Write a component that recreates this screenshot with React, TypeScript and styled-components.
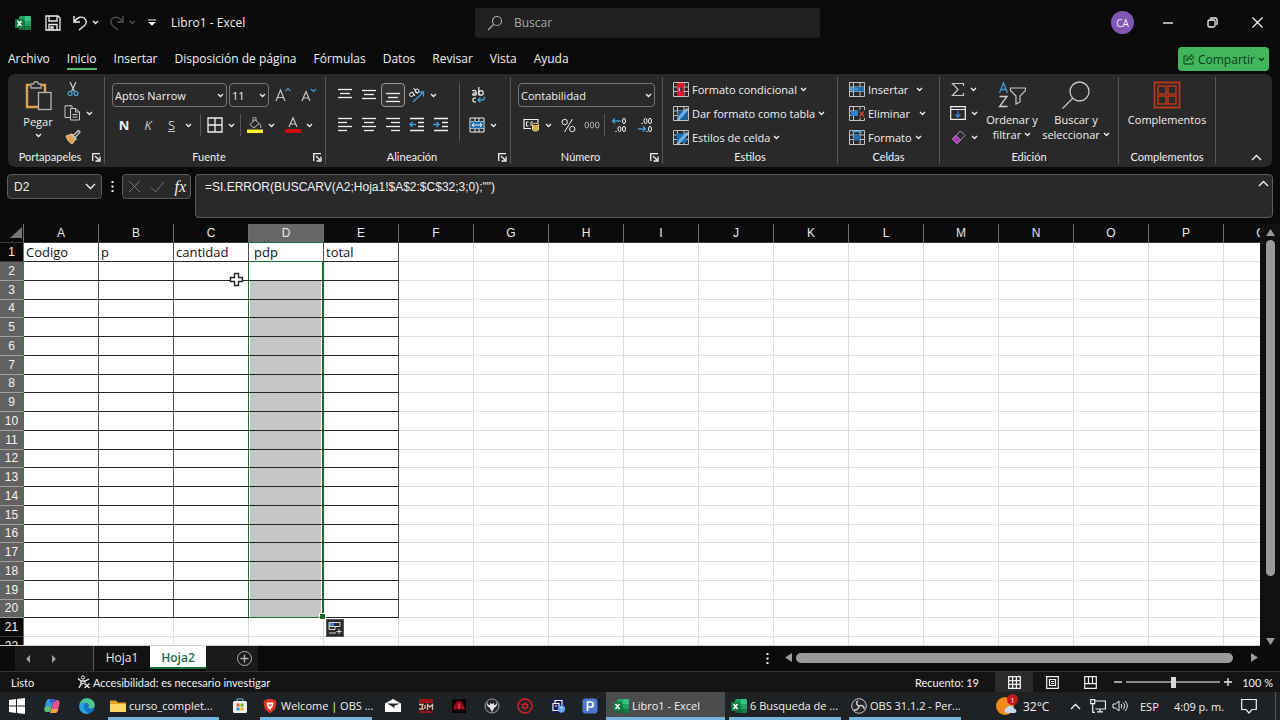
import React from "react";
import styled, { createGlobalStyle, css } from "styled-components";

const ui = `"Open Sans", "Noto Sans", sans-serif`;
const compact = `Lato, "Open Sans", sans-serif`;
const grid = `"Liberation Sans", Arial, sans-serif`;

const GlobalStyle = createGlobalStyle`
  *, *::before, *::after { box-sizing: border-box; }
  body { margin: 0; background: #0a0a0a; color: #f0f0f0; font-family: ${ui}; font-size: 12px; }
  button, select, input { font: inherit; color: inherit; margin: 0; }
  button { border: 0; padding: 0; background: none; cursor: pointer; }
`;

const Window = styled.div`
  display: flex;
  flex-direction: column;
  height: 100vh;
  overflow: hidden;
`;

/* ---------- icons ---------- */

const Svg = styled.svg`
  display: block;
  flex: none;
  fill: none;
  stroke: currentColor;
`;

type IconProps = { w: number; h?: number; children: React.ReactNode };
const Icon = ({ w, h = w, children }: IconProps) => (
  <Svg width={w} height={h} viewBox={`0 0 ${w} ${h}`} aria-hidden="true">
    {children}
  </Svg>
);

const Chevron = () => (
  <Icon w={7} h={5}>
    <path d="M1 1l2.500 2.500L6 1" strokeWidth="1.300" />
  </Icon>
);

const ExcelLogo = () => (
  <Icon w={16}>
    <g stroke="none">
      <rect x="4" y="1" width="12" height="14" rx="1.500" fill="#21a366" />
      <path d="M10 1h4.500a1.500 1.500 0 0 1 1.500 1.500V6h-6z" fill="#33c481" />
      <path d="M4 6h6v5H4z" fill="#107c41" />
      <path d="M10 11h6v2.500a1.500 1.500 0 0 1-1.500 1.500H10z" fill="#107c41" />
      <path d="M4 11h6v4H5.500A1.500 1.500 0 0 1 4 13.500z" fill="#185c37" />
      <rect x="0" y="4" width="9" height="9" rx="1" fill="#107c41" />
    </g>
    <path d="M2.500 6l4 5M6.500 6l-4 5" stroke="#fff" strokeWidth="1.400" />
  </Icon>
);

const SaveIcon = () => (
  <Icon w={16}>
    <path d="M1 1h12l2 2v12H1zM4 1v5h8V1M4 15V9.500h8V15M6 15v-3h2v3" strokeWidth="1.300" />
  </Icon>
);
const UndoIcon = () => (
  <Icon w={16}>
    <path d="M2 1v6h6M2.500 6.500C5 2.500 9 1 12 3s3 5 0 8l-5 4" strokeWidth="1.400" />
  </Icon>
);
const RedoIcon = () => (
  <Icon w={16}>
    <path d="M14 1v6H8M13.500 6.500C11 2.500 7 1 4 3s-3 5 0 8l5 4" strokeWidth="1.300" />
  </Icon>
);
const QuickMenuIcon = () => (
  <Icon w={8}>
    <path d="M0 1h8M1.500 3.500L4 6l2.500-2.500z" strokeWidth="1.200" fill="currentColor" />
  </Icon>
);
const SearchIcon = () => (
  <Icon w={16}>
    <circle cx="10" cy="6" r="4.500" strokeWidth="1.200" />
    <path d="M6.500 9.500L1 15" strokeWidth="1.200" />
  </Icon>
);
const MinimizeIcon = () => (
  <Icon w={10}>
    <path d="M0 5h10" strokeWidth="1.400" />
  </Icon>
);
const RestoreIcon = () => (
  <Icon w={11}>
    <rect x="1" y="3" width="7" height="7" rx="1.500" strokeWidth="1.300" />
    <path d="M3 1.500C3.300 1 4 1 4.500 1H8a2 2 0 0 1 2 2v3.500c0 .5 0 1.200-.5 1.500" strokeWidth="1.300" />
  </Icon>
);
const CloseIcon = () => (
  <Icon w={11}>
    <path d="M.5.5l10 10M10.500.5l-10 10" strokeWidth="1.300" />
  </Icon>
);
const ShareIcon = () => (
  <Icon w={12}>
    <path d="M4 3H1v8h9V8M3.500 8c0-3 2-4.500 4.500-4.500V1.500L11 4.500 8 7V5.500C6 5.500 4.500 6 3.500 8z" />
  </Icon>
);

const PasteIcon = () => (
  <Icon w={28} h={30}>
    <path d="M6 4H3v22h11" stroke="#e0a04c" strokeWidth="2.400" />
    <path d="M17 4h4v7" stroke="#e0a04c" strokeWidth="2.400" />
    <path d="M7 7V3h2.500c0-3 5-3 5 0H17v4z" stroke="#a9a9a9" strokeWidth="1.300" fill="#292929" />
    <rect x="14.500" y="11.500" width="12.500" height="17" stroke="#b5b5b5" strokeWidth="1.300" fill="#292929" />
  </Icon>
);
const CutIcon = () => (
  <Icon w={12} h={16}>
    <path d="M3 1l4.500 9.500M9 1L4.500 10.500" stroke="#d0d0d0" strokeWidth="1.200" />
    <circle cx="3" cy="12.500" r="2" stroke="#3f9ad8" strokeWidth="1.300" />
    <circle cx="9" cy="12.500" r="2" stroke="#3f9ad8" strokeWidth="1.300" />
  </Icon>
);
const CopyIcon = () => (
  <Icon w={17} h={16}>
    <path d="M6 12.500H1V.8h5.500M5.500.8H8V3" stroke="#c8c8c8" />
    <path d="M6.500 3.500h5L15.500 7v8h-9zM11.500 3.500V7h4M8.500 9.500h5M8.500 12h5" stroke="#c8c8c8" />
  </Icon>
);
const BrushIcon = () => (
  <Icon w={16}>
    <path d="M1 7l6-2 4 5-4 5c-2-1-5-4-6-8z" fill="#e0a04c" stroke="#d9c7a5" />
    <path d="M6 5l5.500 5.500M8 6.500l5.500-5 1.500 1.500-5 5.500" stroke="#c8c8c8" strokeWidth="1.300" />
  </Icon>
);
const GrowFontIcon = () => (
  <Icon w={16}>
    <path d="M1 14L5.500 3l4.500 11M2.800 10.500h5.500" strokeWidth="1.200" stroke="#c8c8c8" />
    <path d="M10.500 4L13 1.500 15.500 4" stroke="#3f9ad8" strokeWidth="1.200" />
  </Icon>
);
const ShrinkFontIcon = () => (
  <Icon w={16}>
    <path d="M1 14L5 4.500 9 14M2.500 11h5" strokeWidth="1.200" stroke="#c8c8c8" />
    <path d="M10 2l2.500 2.500L15 2" stroke="#3f9ad8" strokeWidth="1.200" />
  </Icon>
);
const BorderIcon = () => (
  <Icon w={16}>
    <path d="M1 1h14v14H1zM8 1v14M1 8h14" strokeWidth="1.300" />
  </Icon>
);
const FillIcon = () => (
  <Icon w={17}>
    <path d="M4 7.500L9 2.500l4 4-5 4.500zM7 5V1.500a1.500 1.500 0 0 1 3 0V4M13 6.500c2 1 2 3 1.500 4.500" stroke="#c0c0c0" />
    <path d="M1 12.500h16v3.500H1z" fill="#f7f02c" stroke="none" />
  </Icon>
);
const FontColorIcon = () => (
  <Icon w={16}>
    <path d="M4 10L8 .8 12 10M5.500 7h5" stroke="#c8c8c8" strokeWidth="1.200" />
    <path d="M0 12h16v4H0z" fill="#d00a0a" stroke="none" />
  </Icon>
);

const Lines = ({ rows }: { rows: [number, number, number][] }) => (
  <Icon w={16}>
    {rows.map(([x1, x2, y]) => (
      <path key={y} d={`M${x1} ${y + 0.5}H${x2}`} strokeWidth="1.300" />
    ))}
  </Icon>
);
const IndentIcon = ({ right }: { right?: boolean }) => (
  <Icon w={16}>
    <path d="M1 1.500h14M9 5.500h6M9 9.500h6M1 13.500h14" strokeWidth="1.300" />
    <path d={right ? "M0 7.500h6M3.500 5L6 7.500 3.500 10" : "M7 7.500H1M3.500 5L1 7.500 3.500 10"} stroke="#3f9ad8" strokeWidth="1.400" />
  </Icon>
);
const OrientationIcon = () => (
  <Icon w={17} h={16}>
    <circle cx="3.500" cy="7.500" r="2" />
    <path d="M4 4.500l3 4.500M5.500 1l4 5.500" />
    <circle cx="9" cy="4" r="2" />
    <path d="M5 15L15 5.500M11 5h4.500v4.500" stroke="#3f9ad8" strokeWidth="1.300" />
  </Icon>
);
const WrapTextIcon = () => (
  <Icon w={16}>
    <path d="M2.500 4.200c.6-1.200 3.700-1.200 3.700.8v3.200M6.200 5.700c-3.700 0-4.700 2.500-2.200 2.500 1.200 0 2.200-.8 2.200-2M8.800 0v8.500" strokeWidth="1.200" />
    <circle cx="11" cy="5.900" r="2.200" strokeWidth="1.200" />
    <path d="M6 11c-4-.8-4.500 4.500 0 4" strokeWidth="1.200" />
    <path d="M14.500 9.500v1c0 1.700-1 2.500-2.500 2.500H8M10.500 10.500L8 13l2.500 2.500" stroke="#3f9ad8" strokeWidth="1.400" />
  </Icon>
);
const MergeIcon = () => (
  <Icon w={16}>
    <path d="M1 1h14v14H1zM1 4.500h14M1 11.500h14M6 1v3M10 1v3M6 12v3M10 12v3" />
    <path d="M1.500 4.500h13v7h-13z" fill="#1f6fb0" stroke="none" />
    <path d="M3 8h10M5 6L3 8l2 2M11 6l2 2-2 2" />
  </Icon>
);
const CurrencyIcon = () => (
  <Icon w={17} h={14}>
    <path d="M8 10.500H1v-9h14V5" strokeWidth="1.200" />
    <path d="M5.500 4H3.500v4h2M8 4h2M8 4v4" />
    <path d="M9.500 6.500v5.500c1 1.300 5 1.300 6 0V6.500" fill="#c99b2e" stroke="#f0d27a" />
    <ellipse cx="12.500" cy="6.500" rx="3" ry="1.300" fill="#292929" stroke="#f0d27a" />
    <path d="M9.500 9.200c1 1.300 5 1.300 6 0" stroke="#f0d27a" />
  </Icon>
);
const PercentIcon = () => (
  <Icon w={15}>
    <circle cx="3.700" cy="4" r="2.700" />
    <circle cx="11.300" cy="11" r="2.700" />
    <path d="M11.500 1l-8 13" />
  </Icon>
);
const ThousandsIcon = () => (
  <Icon w={16} h={10}>
    <ellipse cx="2.800" cy="5" rx="1.800" ry="3" stroke="#aaa" />
    <ellipse cx="8" cy="5" rx="1.800" ry="3" stroke="#aaa" />
    <ellipse cx="13.200" cy="5" rx="1.800" ry="3" stroke="#aaa" />
  </Icon>
);
const DecimalIcon = ({ less }: { less?: boolean }) => (
  <Icon w={16}>
    <ellipse cx="13" cy="4" rx="1.500" ry="2.700" />
    <ellipse cx="13" cy="12" rx="1.500" ry="2.700" />
    {less ? (
      <>
        <ellipse cx="8.500" cy="4" rx="1.500" ry="2.700" />
        <path d="M5 6v1M10 14v1" strokeWidth="1.300" />
        <path d="M1 12h7M6 9.500L8.500 12 6 14.500" stroke="#3f9ad8" strokeWidth="1.400" />
      </>
    ) : (
      <>
        <ellipse cx="8.500" cy="12" rx="1.500" ry="2.700" />
        <path d="M5 14v1" strokeWidth="1.300" />
        <path d="M10 4H1.500M4 1.500L1.500 4 4 6.500" stroke="#3f9ad8" strokeWidth="1.400" />
      </>
    )}
  </Icon>
);

const TableIcon = ({ children }: { children: React.ReactNode }) => (
  <Icon w={16} h={15}>
    <path d="M.5.5h15v14H.5zM.5 5h15M.5 9.500h15M4.500.5v14M11 .5v14" stroke="#c4c4c4" />
    {children}
  </Icon>
);
const Pen = () => <path d="M15 3.500l-6 7-3.500 3.500 1-4 7-7.500z" fill="#4fa3e0" stroke="#bcdcf5" strokeWidth=".8" />;

const ConditionalIcon = () => (
  <TableIcon>
    <path d="M4 1h7v4H4zM4 10h7v4H4z" fill="#e0182d" stroke="none" />
    <path d="M5 5h5v5H5z" fill="#292929" stroke="#e0182d" strokeWidth="1.500" />
    <path d="M6.500 5.500v4" stroke="#8fb7ff" strokeWidth="1.500" />
  </TableIcon>
);
const FormatTableIcon = () => (
  <TableIcon>
    <path d="M4.500 5H15v9H4.500z" fill="#1f5f9c" stroke="none" />
    <Pen />
  </TableIcon>
);
const CellStyleIcon = () => (
  <TableIcon>
    <path d="M3.500 3.500h10v9h-10z" fill="#1f6fb0" stroke="none" />
    <Pen />
  </TableIcon>
);
const InsertCellsIcon = () => (
  <TableIcon>
    <path d="M6 5h9v4.500H6z" fill="#1f6fb0" stroke="none" />
    <path d="M9 7.300H1.500M4.500 4.300l-3 3 3 3" stroke="#4fa3e0" strokeWidth="1.500" />
  </TableIcon>
);
const DeleteCellsIcon = () => (
  <TableIcon>
    <path d="M2 5h7v5H2z" fill="#2f80d0" stroke="none" />
    <path d="M9 4h7v8H9z" fill="#292929" stroke="none" />
    <path d="M10.500 5.500l4.500 5M15 5.500l-4.500 5" stroke="#d13c3c" strokeWidth="1.400" />
  </TableIcon>
);
const FormatCellsIcon = () => (
  <TableIcon>
    <path d="M4.500 4.500H11v6H4.500z" fill="#1f6fb0" stroke="none" />
    <path d="M4 1.500h8M4 0v3M12 0v3" stroke="#4fa3e0" strokeWidth="1.400" />
  </TableIcon>
);
const SumIcon = () => (
  <Icon w={14} h={15}>
    <path d="M12.500 4V1.500H1.500L7 7.500l-5.500 6h11V11" stroke="#c8c8c8" strokeWidth="1.200" />
  </Icon>
);
const FillDownIcon = () => (
  <Icon w={16} h={14}>
    <path d="M.7.7h14.600v12.600H.7zM.7 3.500h14.600" strokeWidth="1.200" />
    <path d="M8 5v6M5.500 8.500L8 11l2.500-2.500" stroke="#3f7fe0" strokeWidth="1.400" />
  </Icon>
);
const EraserIcon = () => (
  <Icon w={15}>
    <path d="M1.500 9l8-8L14 5.500l-8 8z" stroke="#b98fc4" />
    <path d="M1.500 9L5 5.500 9.500 10 6 13.500z" fill="#a23bb5" stroke="#c77bd6" />
  </Icon>
);
const SortFilterIcon = () => (
  <Icon w={28}>
    <path d="M1.500 12L5.500 2l4 10M3 8.500h5" stroke="#3f9ad8" strokeWidth="1.300" />
    <path d="M1.500 15.500h7.500l-7.500 10H9.500" stroke="#d0d0d0" strokeWidth="1.300" />
    <path d="M12.500 7h15v2.500L22 15v6l-4 2v-8l-5.500-5.500z" stroke="#c8c8c8" strokeWidth="1.200" />
  </Icon>
);
const FindIcon = () => (
  <Icon w={28}>
    <circle cx="17.500" cy="10.500" r="9.500" stroke="#c8c8c8" strokeWidth="1.300" />
    <path d="M10.500 17.500L.5 27.500" stroke="#c8c8c8" strokeWidth="1.300" />
  </Icon>
);
const AddinsIcon = () => (
  <Icon w={28}>
    <path d="M1.500 1.500h25v25h-25z" stroke="#b8381c" strokeWidth="1.800" />
    <path d="M5 5h8v8H5zM15 5h8v8h-8zM5 15h8v8H5zM15 15h8v8h-8z" stroke="#b8381c" strokeWidth="1.500" />
  </Icon>
);
const LauncherIcon = () => (
  <Icon w={9}>
    <path d="M.7 8V.7H8M3 3l4 4M8 3.500V8H3.500" strokeWidth="1.300" />
  </Icon>
);
const WideChevron = ({ up }: { up?: boolean }) => (
  <Icon w={11} h={7}>
    <path d={up ? "M1 6l4.500-4.500L10 6" : "M1 1l4.500 4.500L10 1"} strokeWidth="1.400" />
  </Icon>
);

/* ---------- title bar ---------- */

const TitleBar = styled.header`
  display: grid;
  grid-template-columns: 1fr 345px 1fr;
  align-items: center;
  height: 45px;
  flex: none;
  padding-left: 15px;
`;
const QuickAccess = styled.div`
  display: flex;
  align-items: center;
`;
const QuickButton = styled.button<{ $w: number; $dim?: boolean }>`
  display: flex;
  align-items: center;
  gap: 4px;
  width: ${(p) => p.$w}px;
  color: ${(p) => (p.$dim ? "#555" : "#f0f0f0")};
`;
const SearchBox = styled.label`
  display: flex;
  align-items: center;
  gap: 11px;
  height: 30px;
  padding: 0 12px;
  background: #202020;
  border-radius: 3px;
  color: #a8a8a8;
`;
const SearchInput = styled.input`
  flex: 1;
  border: 0;
  padding: 0;
  outline: 0;
  background: none;
  &::placeholder { color: #a8a8a8; opacity: 1; }
`;
const WindowControls = styled.div`
  display: flex;
  align-items: center;
  justify-content: flex-end;
`;
const Avatar = styled.button`
  width: 23px;
  height: 23px;
  margin-right: 11px;
  border-radius: 50%;
  background: #7f57b4;
  font-size: 10px;
`;
const WindowButton = styled.button`
  display: grid;
  place-items: center;
  width: 45px;
  height: 45px;
`;

/* ---------- ribbon tabs ---------- */

const TabBar = styled.nav`
  display: flex;
  align-items: center;
  gap: 17px;
  flex: none;
  height: 29px;
  padding: 0 11px 1px 8px;
`;
const RibbonTab = styled.button<{ $active?: boolean }>`
  height: 22px;
  line-height: 20px;
  padding-top: 1px;
  border-bottom: 2px solid ${(p) => (p.$active ? "#55b36f" : "transparent")};
`;
const ShareButton = styled.button`
  display: flex;
  align-items: center;
  justify-content: space-between;
  width: 91px;
  height: 24px;
  margin-left: auto;
  padding: 0 4px 0 5px;
  border-radius: 4px;
  background: #41b65c;
  color: #0d3d1b;
`;

/* ---------- ribbon ---------- */

const Ribbon = styled.section`
  display: flex;
  flex: none;
  height: 93px;
  margin: 0 8px;
  background: #292929;
  border-radius: 7px;
  font-size: 11px;
`;
const Group = styled.section<{ $w: number }>`
  display: flex;
  flex-direction: column;
  width: ${(p) => p.$w}px;
  margin: 3px 0;
  border-right: 1px solid #565656;
`;
const GroupBody = styled.div<{ $pad: number; $top?: number }>`
  display: flex;
  flex: 1;
  min-height: 0;
  padding: ${(p) => p.$top ?? 0}px 0 0 ${(p) => p.$pad}px;
`;
const GroupFooter = styled.footer<{ $launcher?: boolean }>`
  display: grid;
  grid-template-columns: ${(p) => (p.$launcher ? "1fr 12px" : "1fr")};
  align-items: center;
  height: 14px;
  line-height: 14px;
  text-align: center;
  font-family: ${compact};
`;
const GroupTitle = styled.span`
  white-space: nowrap;
`;
const Stack = styled.div<{ $gap?: number; $w?: number }>`
  display: flex;
  flex-direction: column;
  gap: ${(p) => p.$gap ?? 0}px;
  ${(p) => p.$w && css`width: ${p.$w}px;`}
`;
const Row = styled.div<{ $gap?: number }>`
  display: flex;
  align-items: center;
  gap: ${(p) => p.$gap ?? 0}px;
  height: 24px;
`;
const ToolButton = styled.button<{ $w?: number; $pressed?: boolean }>`
  display: flex;
  align-items: center;
  justify-content: center;
  gap: 5px;
  width: ${(p) => p.$w ?? 24}px;
  height: 24px;
  flex: none;
  border-radius: 4px;
  ${(p) => p.$pressed && css`border: 1px solid #9a9a9a; background: #333;`}
`;
const StyleLetter = styled.span<{ $kind: "bold" | "italic" | "underline" }>`
  font-size: 13px;
  color: ${(p) => (p.$kind === "bold" ? "#f0f0f0" : "#c8c8c8")};
  font-weight: ${(p) => (p.$kind === "bold" ? 700 : 400)};
  font-style: ${(p) => (p.$kind === "italic" ? "italic" : "normal")};
  text-decoration: ${(p) => (p.$kind === "underline" ? "underline" : "none")};
`;
const ToolDivider = styled.span<{ $h?: number }>`
  flex: none;
  width: 1px;
  height: ${(p) => p.$h ?? 22}px;
  background: #565656;
`;
const CommandButton = styled.button<{ $w?: number }>`
  display: flex;
  align-items: center;
  gap: 3px;
  height: 24px;
  white-space: nowrap;
  ${(p) => p.$w && css`width: ${p.$w}px; & > svg:last-child { margin-left: auto; }`}
`;
const BigButton = styled.button<{ $w: number }>`
  display: flex;
  flex-direction: column;
  align-items: center;
  width: ${(p) => p.$w}px;
  height: 70px;
  padding-top: 4px;
  line-height: 15px;
  & > svg:first-child { margin-bottom: 3px; }
  & > svg:last-child { margin-top: 4px; }
`;
const BigLabel = styled.span`
  display: flex;
  align-items: center;
  gap: 3px;
  white-space: nowrap;
`;
const SelectFrame = styled.span<{ $w: number }>`
  display: grid;
  align-items: center;
  flex: none;
  width: ${(p) => p.$w}px;
  height: 24px;
  border: 1px solid #767676;
  border-radius: 4px;
  & > * { grid-area: 1 / 1; }
  & > svg { justify-self: end; margin-right: 2px; pointer-events: none; }
`;
const Select = styled.select`
  appearance: none;
  width: 100%;
  height: 22px;
  padding: 0 12px 0 2px;
  border: 0;
  outline: 0;
  background: transparent;
`;
const CollapseButton = styled.button`
  align-self: flex-end;
  margin: 0 10px 6px auto;
`;

type DropProps = { label: string; w: number; value: string; options: string[] };
const DropDown = ({ label, w, value, options }: DropProps) => (
  <SelectFrame $w={w}>
    <Select aria-label={label} defaultValue={value}>
      {options.map((o) => (
        <option key={o}>{o}</option>
      ))}
    </Select>
    <Chevron />
  </SelectFrame>
);

type GroupProps = { title: string; w: number; pad: number; top?: number; launcher?: boolean; children: React.ReactNode };
const RibbonGroup = ({ title, w, pad, top, launcher, children }: GroupProps) => (
  <Group $w={w} aria-label={title}>
    <GroupBody $pad={pad} $top={top}>{children}</GroupBody>
    <GroupFooter $launcher={launcher}>
      <GroupTitle>{title}</GroupTitle>
      {launcher && (
        <button aria-label={`Opciones de ${title}`}>
          <LauncherIcon />
        </button>
      )}
    </GroupFooter>
  </Group>
);

/* ---------- formula bar ---------- */

const FormulaBar = styled.section`
  display: flex;
  flex: none;
  align-items: flex-start;
  padding: 7px 7px 6px;
  font-family: ${grid};
`;
const NameBox = styled.label`
  display: flex;
  align-items: center;
  width: 95px;
  height: 25px;
  padding: 0 5px 0 6px;
  border: 1px solid #5c5c5c;
  border-radius: 4px;
  background: #292929;
`;
const NameInput = styled.input`
  flex: 1;
  min-width: 0;
  padding: 0;
  border: 0;
  outline: 0;
  background: none;
`;
const BarDots = styled.span`
  display: grid;
  place-items: center;
  width: 20px;
  height: 25px;
`;
const FxBox = styled.div`
  display: flex;
  align-items: center;
  justify-content: space-between;
  width: 69px;
  height: 25px;
  margin-right: 4px;
  padding: 0 4px 0 5px;
  border: 1px solid #5c5c5c;
  border-radius: 4px;
  background: #292929;
  color: #757575;
`;
const FxLabel = styled.button`
  color: #f0f0f0;
  font-family: "Liberation Serif", serif;
  font-size: 16px;
  font-style: italic;
  line-height: 20px;
`;
const FormulaBox = styled.div`
  display: flex;
  align-items: flex-start;
  flex: 1;
  height: 44px;
  padding: 5px 3px 0 9px;
  border: 1px solid #5c5c5c;
  border-radius: 4px;
  background: #292929;
`;
const FormulaInput = styled.textarea`
  flex: 1;
  height: 34px;
  padding: 0;
  border: 0;
  outline: 0;
  resize: none;
  background: none;
  color: inherit;
  font: inherit;
  line-height: 14px;
`;

const Dots = () => (
  <Icon w={3} h={12}>
    <path d="M.5 1h2M.5 5.500h2M.5 10h2" strokeWidth="2" />
  </Icon>
);

/* ---------- sheet ---------- */

const SheetArea = styled.main`
  display: flex;
  flex: 1;
  min-height: 0;
`;
const SheetViewport = styled.div`
  flex: 1;
  min-width: 0;
  overflow: hidden;
  background: linear-gradient(#0a0a0a 19px, #fff 19px);
  border-bottom: 1px solid #d0d0d0;
`;
const Sheet = styled.table`
  width: 1299px;
  table-layout: fixed;
  border-collapse: separate;
  border-spacing: 0;
  font-family: ${grid};
  color: #111;
`;
const HeaderCol = styled.col`
  width: 24px;
`;
const ColHead = styled.th<{ $active?: boolean }>`
  height: 19px;
  padding: 0;
  border-right: 1px solid #6e6e6e;
  border-bottom: 1px solid ${(p) => (p.$active ? "#1c6b3f" : "#3a3a3a")};
  background: ${(p) => (p.$active ? "#666" : "#0a0a0a")};
  color: #e8e8e8;
  font-weight: 400;
  line-height: 18px;
`;
const Corner = styled(ColHead)`
  & > svg { margin-left: 10px; }
`;
const SheetRow = styled.tr`
  height: 19px;
  &:nth-child(4n) { height: 18px; }
`;
const RowHead = styled.th<{ $active?: boolean }>`
  padding: 0;
  border-right: 1px solid ${(p) => (p.$active ? "#2e7d4a" : "#6e6e6e")};
  border-bottom: 1px solid ${(p) => (p.$active ? "#a0a0a0" : "#3a3a3a")};
  background: ${(p) => (p.$active ? "#626262" : "#0a0a0a")};
  color: #f4f4f4;
  font-weight: 400;
  line-height: 17px;
`;
const Cell = styled.td<{ $boxed?: boolean; $edge?: boolean; $selected?: boolean; $first?: boolean; $last?: boolean; $above?: boolean; $indent?: boolean }>`
  position: relative;
  padding: 0 0 0 ${(p) => (p.$indent ? 5 : 2)}px;
  border-right: ${(p) => (p.$selected ? 2 : 1)}px solid ${(p) => (p.$edge ? "#1c6b2c" : p.$boxed ? "#505050" : "#dedede")};
  border-bottom: 1px solid ${(p) => (p.$above || p.$last ? "#1c6b2c" : p.$boxed ? "#262626" : "#dedede")};
  font-family: ${ui};
  font-size: 13px;
  line-height: 17px;
  white-space: nowrap;
  ${(p) => p.$selected && css`
    background: ${p.$first ? "#fff" : "#c6c6c6"};
    box-shadow: inset 1px 0 #fff, inset -1px 0 #fff;
  `}
`;
const FillHandle = styled.span`
  position: absolute;
  right: -3px;
  bottom: -2px;
  z-index: 1;
  width: 5px;
  height: 5px;
  background: #1c6b2c;
  outline: 1px solid #fff;
`;
const PasteOptions = styled.button`
  position: absolute;
  top: 1px;
  left: 2px;
  z-index: 1;
  display: grid;
  place-items: center;
  width: 18px;
  height: 18px;
  background: #2b2b2b;
  border: 1px solid #555;
  color: #d8d8d8;
`;
const Pointer = styled.span`
  position: absolute;
  right: 4px;
  top: 10px;
  z-index: 1;
`;

const columns = "ABCDEFGHIJKLMNOPQ".split("");
const headings: Record<string, string> = { A: "Codigo", B: "p", C: "cantidad", D: "pdp", E: "total" };
const rows = Array.from({ length: 22 }, (_, i) => i + 1);

const SheetTable = () => (
  <Sheet>
    <colgroup>
      <HeaderCol />
      {columns.map((c) => (
        <col key={c} />
      ))}
    </colgroup>
    <thead>
      <tr>
        <Corner aria-label="Seleccionar todo">
          <Icon w={12}>
            <path d="M12 0v11H0z" fill="#757575" stroke="none" />
          </Icon>
        </Corner>
        {columns.map((c) => (
          <ColHead key={c} scope="col" $active={c === "D"}>{c}</ColHead>
        ))}
      </tr>
    </thead>
    <tbody>
      {rows.map((r) => (
        <SheetRow key={r}>
          <RowHead scope="row" $active={r > 1 && r < 21}>{r}</RowHead>
          {columns.map((c) => {
            const inRange = r > 1 && r < 21;
            const selected = c === "D" && inRange;
            return (
              <Cell
                key={c}
                $boxed={c < "F" && r < 21}
                $selected={selected}
                $edge={inRange && (c === "C" || c === "D")}
                $first={r === 2}
                $last={selected && r === 20}
                $above={c === "D" && r === 1}
                $indent={c === "D"}
              >
                {r === 1 && headings[c]}
                {c === "C" && r === 2 && (
                  <Pointer>
                    <Icon w={15}>
                      <path d="M5.500 1.500h4v4h4v4h-4v4h-4v-4h-4v-4h4z" fill="#fff" stroke="#222" strokeWidth="1.400" />
                    </Icon>
                  </Pointer>
                )}
                {c === "D" && r === 20 && <FillHandle />}
                {c === "E" && r === 21 && (
                  <PasteOptions aria-label="Opciones de autorrelleno">
                    <Icon w={14}>
                      <path d="M1 2h5v3H1z" fill="#3f7fe0" stroke="none" />
                      <path d="M1 1.500h11v4H1zM1 5.500v3h6v-3M1 12h7M11 8v5M8.500 10.500h5" />
                    </Icon>
                  </PasteOptions>
                )}
              </Cell>
            );
          })}
        </SheetRow>
      ))}
    </tbody>
  </Sheet>
);

const VerticalScroll = styled.div`
  display: flex;
  flex-direction: column;
  align-items: center;
  width: 20px;
  padding: 5px 0 1px;
  background: #0f0f0f;
  color: #9a9a9a;
`;
const VerticalTrack = styled.div`
  flex: 1;
  width: 9px;
  margin: 4px 0 3px;
`;
const VerticalThumb = styled.div`
  height: 85%;
  border-radius: 5px;
  background: #9a9a9a;
`;
const Arrow = ({ d, w, h }: { d: string; w: number; h: number }) => (
  <Icon w={w} h={h}>
    <path d={d} fill="currentColor" stroke="none" />
  </Icon>
);

/* ---------- sheet tabs ---------- */

const SheetTabs = styled.nav`
  display: flex;
  flex: none;
  height: 25px;
  padding-left: 15px;
`;
const TabArrows = styled.div`
  display: flex;
  align-items: center;
  gap: 20px;
  width: 79px;
  padding-left: 10px;
  background: #1a1a1a;
  border-right: 1px solid #5c5c5c;
  color: #a0a0a0;
`;
const SheetTab = styled.button<{ $active?: boolean }>`
  width: 56px;
  height: 23px;
  padding-top: 1px;
  background: ${(p) => (p.$active ? "#fff" : "#121212")};
  border-bottom: 2px solid ${(p) => (p.$active ? "#1c6b3f" : "#121212")};
  color: ${(p) => (p.$active ? "#1c6b3f" : "#e8e8e8")};
  font-weight: ${(p) => (p.$active ? 600 : 400)};
`;
const NewSheet = styled.button`
  display: grid;
  align-items: center;
  justify-content: end;
  width: 52px;
  padding-right: 6px;
  background: #1a1a1a;
  color: #b0b0b0;
`;
const TabSpacer = styled.span`
  display: flex;
  align-items: center;
  justify-content: flex-end;
  flex: 1;
  padding-right: 10px;
`;
const HorizontalScroll = styled.div`
  display: flex;
  align-items: center;
  gap: 4px;
  width: 38%;
  padding: 0 2px 2px 6px;
  margin-right: 20px;
  color: #9a9a9a;
`;
const HorizontalTrack = styled.div`
  flex: 1;
`;
const HorizontalThumb = styled.div`
  width: 97%;
  height: 10px;
  border-radius: 5px;
  background: #9a9a9a;
`;

/* ---------- status bar ---------- */

const StatusBar = styled.footer`
  display: flex;
  align-items: center;
  flex: none;
  height: 21px;
  padding: 0 7px 0 11px;
  border-top: 1px solid #333;
  background: #141414;
  font-family: ${compact};
  font-size: 11px;
`;
const StatusText = styled.span<{ $w?: number }>`
  white-space: nowrap;
  ${(p) => p.$w && css`width: ${p.$w}px;`}
`;
const StatusButton = styled.button`
  display: flex;
  align-items: center;
  gap: 2px;
  margin-right: auto;
`;
const ViewButton = styled.button<{ $active?: boolean }>`
  display: grid;
  place-items: center;
  width: 38px;
  height: 20px;
  background: ${(p) => (p.$active ? "#2b2b2b" : "none")};
`;
const ViewButtons = styled.div`
  display: flex;
  margin: 0 5px 0 16px;
`;
const ZoomSlider = styled.input`
  appearance: none;
  width: 94px;
  height: 12px;
  margin: 0 4px;
  background: linear-gradient(#8a8a8a, #8a8a8a) center / 100% 2px no-repeat;
  &::-webkit-slider-thumb {
    appearance: none;
    width: 5px;
    height: 11px;
    background: #d8d8d8;
  }
`;
const ZoomValue = styled.button`
  width: 41px;
  text-align: right;
`;

/* ---------- taskbar ---------- */

const Taskbar = styled.nav`
  display: flex;
  flex: none;
  height: 28px;
  background: #1f2224;
  font-size: 11px;
`;
const Pin = styled.button<{ $w: number }>`
  display: grid;
  place-items: center;
  width: ${(p) => p.$w}px;
`;
const Task = styled.button<{ $w: number; $active?: boolean; $gap?: number }>`
  display: flex;
  align-items: center;
  gap: 3px;
  width: ${(p) => p.$w}px;
  margin-right: ${(p) => p.$gap ?? 0}px;
  padding: 2px 0 0 ${(p) => (p.$active ? 7 : 2)}px;
  border-bottom: 3px solid #76b4e0;
  background: ${(p) => (p.$active ? "#4a4c4e" : "none")};
  white-space: nowrap;
`;
const Tray = styled.div`
  display: flex;
  align-items: center;
  justify-content: flex-end;
  flex: 1;
  padding-right: 4px;
`;
const TrayButton = styled.button<{ $w: number }>`
  display: flex;
  align-items: center;
  gap: 6px;
  width: ${(p) => p.$w}px;
  height: 28px;
  white-space: nowrap;
`;
const WeatherText = styled.span`
  font-size: 12px;
`;
const WeatherIcon = styled.span`
  position: relative;
  display: block;
`;
const WeatherBadge = styled.span`
  position: absolute;
  top: -2px;
  right: -1px;
  width: 11px;
  height: 11px;
  border-radius: 50%;
  background: #c4161c;
  font-size: 8px;
  line-height: 11px;
  text-align: center;
`;
const DesktopEdge = styled.span`
  width: 1px;
  height: 28px;
  background: #565656;
`;

export default function App() {
  return (
    <Window>
      <GlobalStyle />
      <TitleBar>
        <QuickAccess>
          <QuickButton $w={30} aria-label="Excel"><ExcelLogo /></QuickButton>
          <QuickButton $w={27} aria-label="Guardar"><SaveIcon /></QuickButton>
          <QuickButton $w={37} aria-label="Deshacer"><UndoIcon /><Chevron /></QuickButton>
          <QuickButton $w={39} $dim aria-label="Rehacer"><RedoIcon /><Chevron /></QuickButton>
          <QuickButton $w={23} aria-label="Personalizar barra"><QuickMenuIcon /></QuickButton>
          <span>Libro1 - Excel</span>
        </QuickAccess>
        <SearchBox>
          <SearchIcon />
          <SearchInput aria-label="Buscar" placeholder="Buscar" />
        </SearchBox>
        <WindowControls>
          <Avatar>CA</Avatar>
          <WindowButton aria-label="Minimizar"><MinimizeIcon /></WindowButton>
          <WindowButton aria-label="Restaurar"><RestoreIcon /></WindowButton>
          <WindowButton aria-label="Cerrar"><CloseIcon /></WindowButton>
        </WindowControls>
      </TitleBar>

      <TabBar>
        {["Archivo", "Inicio", "Insertar", "Disposición de página", "Fórmulas", "Datos", "Revisar", "Vista", "Ayuda"].map((t) => (
          <RibbonTab key={t} $active={t === "Inicio"}>{t}</RibbonTab>
        ))}
        <ShareButton><ShareIcon />Compartir<Chevron /></ShareButton>
      </TabBar>

      <Ribbon>
        <RibbonGroup title="Portapapeles" w={97} pad={4} launcher>
          <BigButton $w={52}><PasteIcon />Pegar<Chevron /></BigButton>
          <Stack>
            <ToolButton $w={17} aria-label="Cortar"><CutIcon /></ToolButton>
            <ToolButton $w={28} aria-label="Copiar"><CopyIcon /><Chevron /></ToolButton>
            <ToolButton $w={17} aria-label="Copiar formato"><BrushIcon /></ToolButton>
          </Stack>
        </RibbonGroup>

        <RibbonGroup title="Fuente" w={221} pad={7} top={6} launcher>
          <Stack $gap={6}>
            <Row $gap={2}>
              <DropDown label="Fuente" w={115} value="Aptos Narrow" options={["Aptos Narrow", "Calibri"]} />
              <DropDown label="Tamaño de fuente" w={40} value="11" options={["10", "11", "12"]} />
              <ToolButton aria-label="Aumentar tamaño"><GrowFontIcon /></ToolButton>
              <ToolButton aria-label="Disminuir tamaño"><ShrinkFontIcon /></ToolButton>
            </Row>
            <Row>
              <ToolButton aria-label="Negrita"><StyleLetter $kind="bold">N</StyleLetter></ToolButton>
              <ToolButton aria-label="Cursiva"><StyleLetter $kind="italic">K</StyleLetter></ToolButton>
              <ToolButton $w={40} aria-label="Subrayado"><StyleLetter $kind="underline">S</StyleLetter><span /><Chevron /></ToolButton>
              <ToolDivider />
              <ToolButton $w={39} aria-label="Bordes"><BorderIcon /><Chevron /></ToolButton>
              <ToolDivider />
              <ToolButton $w={39} aria-label="Color de relleno"><FillIcon /><Chevron /></ToolButton>
              <ToolButton $w={37} aria-label="Color de fuente"><FontColorIcon /><Chevron /></ToolButton>
            </Row>
          </Stack>
        </RibbonGroup>

        <RibbonGroup title="Alineación" w={185} pad={7} top={6} launcher>
          <Stack $gap={6} $w={126}>
            <Row>
              <ToolButton aria-label="Alinear arriba"><Lines rows={[[1, 15, 2], [3, 13, 6], [1, 15, 10]]} /></ToolButton>
              <ToolButton aria-label="Alinear en medio"><Lines rows={[[1, 15, 3], [3, 13, 7], [1, 15, 11]]} /></ToolButton>
              <ToolButton $pressed aria-label="Alinear abajo"><Lines rows={[[1, 15, 6], [3, 13, 10], [1, 15, 14]]} /></ToolButton>
              <ToolButton $w={34} aria-label="Orientación"><OrientationIcon /><Chevron /></ToolButton>
            </Row>
            <Row>
              <ToolButton aria-label="Alinear a la izquierda"><Lines rows={[[1, 15, 1], [1, 10, 5], [1, 15, 9], [1, 10, 13]]} /></ToolButton>
              <ToolButton aria-label="Centrar"><Lines rows={[[1, 15, 1], [3, 13, 5], [1, 15, 9], [3, 13, 13]]} /></ToolButton>
              <ToolButton aria-label="Alinear a la derecha"><Lines rows={[[1, 15, 1], [6, 15, 5], [1, 15, 9], [6, 15, 13]]} /></ToolButton>
              <ToolButton aria-label="Disminuir sangría"><IndentIcon /></ToolButton>
              <ToolButton aria-label="Aumentar sangría"><IndentIcon right /></ToolButton>
            </Row>
          </Stack>
          <ToolDivider $h={58} />
          <Stack $gap={6}>
            <ToolButton $w={36} aria-label="Ajustar texto"><WrapTextIcon /></ToolButton>
            <ToolButton $w={46} aria-label="Combinar y centrar"><MergeIcon /><Chevron /></ToolButton>
          </Stack>
        </RibbonGroup>

        <RibbonGroup title="Número" w={152} pad={7} top={6} launcher>
          <Stack $gap={6}>
            <DropDown label="Formato de número" w={137} value="Contabilidad" options={["General", "Número", "Contabilidad"]} />
            <Row>
              <ToolButton $w={38} aria-label="Formato de moneda"><CurrencyIcon /><Chevron /></ToolButton>
              <ToolButton aria-label="Porcentaje"><PercentIcon /></ToolButton>
              <ToolButton aria-label="Millares"><ThousandsIcon /></ToolButton>
              <ToolDivider />
              <ToolButton $w={28} aria-label="Aumentar decimales"><DecimalIcon /></ToolButton>
              <ToolButton aria-label="Disminuir decimales"><DecimalIcon less /></ToolButton>
            </Row>
          </Stack>
        </RibbonGroup>

        <RibbonGroup title="Estilos" w={175} pad={10}>
          <Stack>
            <CommandButton><ConditionalIcon />Formato condicional<Chevron /></CommandButton>
            <CommandButton><FormatTableIcon />Dar formato como tabla<Chevron /></CommandButton>
            <CommandButton><CellStyleIcon />Estilos de celda<Chevron /></CommandButton>
          </Stack>
        </RibbonGroup>

        <RibbonGroup title="Celdas" w={102} pad={11}>
          <Stack>
            <CommandButton $w={74}><InsertCellsIcon />Insertar<Chevron /></CommandButton>
            <CommandButton $w={77}><DeleteCellsIcon />Eliminar<Chevron /></CommandButton>
            <CommandButton><FormatCellsIcon />Formato<Chevron /></CommandButton>
          </Stack>
        </RibbonGroup>

        <RibbonGroup title="Edición" w={179} pad={8}>
          <Stack>
            <ToolButton $w={32} aria-label="Autosuma"><SumIcon /><Chevron /></ToolButton>
            <ToolButton $w={32} aria-label="Rellenar"><FillDownIcon /><Chevron /></ToolButton>
            <ToolButton $w={32} aria-label="Borrar"><EraserIcon /><Chevron /></ToolButton>
          </Stack>
          <BigButton $w={64}>
            <SortFilterIcon />
            <BigLabel>Ordenar y</BigLabel>
            <BigLabel>filtrar<Chevron /></BigLabel>
          </BigButton>
          <BigButton $w={64}>
            <FindIcon />
            <BigLabel>Buscar y</BigLabel>
            <BigLabel>seleccionar<Chevron /></BigLabel>
          </BigButton>
        </RibbonGroup>

        <RibbonGroup title="Complementos" w={97} pad={0}>
          <BigButton $w={96}>
            <AddinsIcon />
            <BigLabel>Complementos</BigLabel>
          </BigButton>
        </RibbonGroup>
        <CollapseButton aria-label="Contraer cinta"><WideChevron up /></CollapseButton>
      </Ribbon>

      <FormulaBar>
        <NameBox>
          <NameInput aria-label="Cuadro de nombres" defaultValue="D2" />
          <WideChevron />
        </NameBox>
        <BarDots><Dots /></BarDots>
        <FxBox>
          <Icon w={13}><path d="M1 1l11 11M12 1L1 12" /></Icon>
          <Icon w={15} h={12}><path d="M1 6.500L5.500 11 14 1" /></Icon>
          <FxLabel>fx</FxLabel>
        </FxBox>
        <FormulaBox>
          <FormulaInput aria-label="Fórmula" spellCheck={false} defaultValue={'=SI.ERROR(BUSCARV(A2;Hoja1!$A$2:$C$32;3;0);"")'} />
          <WideChevron up />
        </FormulaBox>
      </FormulaBar>

      <SheetArea>
        <SheetViewport><SheetTable /></SheetViewport>
        <VerticalScroll>
          <Arrow w={9} h={7} d="M4.500 0L9 7H0z" />
          <VerticalTrack><VerticalThumb /></VerticalTrack>
          <Arrow w={9} h={7} d="M4.500 7L9 0H0z" />
        </VerticalScroll>
      </SheetArea>

      <SheetTabs>
        <TabArrows>
          <Arrow w={6} h={8} d="M5 0v8L1 4z" />
          <Arrow w={6} h={8} d="M1 0v8l4-4z" />
        </TabArrows>
        <SheetTab>Hoja1</SheetTab>
        <SheetTab $active>Hoja2</SheetTab>
        <NewSheet aria-label="Nueva hoja">
          <Icon w={15}>
            <circle cx="7.500" cy="7.500" r="7" />
            <path d="M7.500 3.500v8M3.500 7.500h8" strokeWidth="1.400" />
          </Icon>
        </NewSheet>
        <TabSpacer><Dots /></TabSpacer>
        <HorizontalScroll>
          <Arrow w={7} h={9} d="M7 0v9L0 4.500z" />
          <HorizontalTrack><HorizontalThumb /></HorizontalTrack>
          <Arrow w={7} h={9} d="M0 0v9l7-4.500z" />
        </HorizontalScroll>
      </SheetTabs>

      <StatusBar>
        <StatusText $w={66}>Listo</StatusText>
        <StatusButton>
          <Icon w={14}>
            <circle cx="6" cy="2.500" r="1.600" />
            <path d="M1 3.500l3 2.500h4l4-2M4 6v3l-2 4M8 6v2M4.500 9L7 8M7.500 8.500l5 4.500M12.500 8.500l-5 4.500" strokeWidth="1.300" />
          </Icon>
          Accesibilidad: es necesario investigar
        </StatusButton>
        <StatusText>Recuento: 19</StatusText>
        <ViewButtons>
          <ViewButton $active aria-label="Normal">
            <Icon w={13}><path d="M.7.7h11.600v11.600H.7zM4.600.7v11.600M8.400.7v11.600M.7 4.600h11.600M.7 8.400h11.600" strokeWidth="1.300" /></Icon>
          </ViewButton>
          <ViewButton aria-label="Diseño de página">
            <Icon w={13}><path d="M.7.7h11.600v11.600H.7zM3.500 3.500h6v6h-6zM5 5.500h3M5 7.500h3" strokeWidth="1.200" /></Icon>
          </ViewButton>
          <ViewButton aria-label="Vista de salto de página">
            <Icon w={13}><path d="M.7.7h11.600v11.600H.7zM4.500.7v7h-4M8.500.7v7h-4M8.500 7.700h4" strokeWidth="1.200" /></Icon>
          </ViewButton>
        </ViewButtons>
        <button aria-label="Alejar"><Icon w={8}><path d="M0 4h8" strokeWidth="1.300" /></Icon></button>
        <ZoomSlider type="range" aria-label="Zoom" defaultValue={50} />
        <button aria-label="Acercar"><Icon w={8}><path d="M0 4h8M4 0v8" strokeWidth="1.300" /></Icon></button>
        <ZoomValue>100 %</ZoomValue>
      </StatusBar>

      <Taskbar>
        <Pin $w={34} aria-label="Inicio de Windows">
          <Icon w={16}><path d="M0 2l7-1v6.500H0zM8 1l8-1v7.500H8zM0 8.500h7V15l-7-1zM8 8.500h8V16l-8-1z" fill="#fff" stroke="none" /></Icon>
        </Pin>
        <Pin $w={36} aria-label="Copilot">
          <Icon w={16}>
            <g stroke="none">
              <path d="M5 1h5l-3 10c-.5 2-1.500 3-3 3H3c-2 0-3-1-2.500-4l1.500-6c.5-2 1.500-3 3-3z" fill="#2e9ae0" />
              <path d="M2 9l2-1 3 2c-.5 3-1.500 4-3 4H3c-2 0-3-2-2.500-4z" fill="#5fc26a" />
              <path d="M11 15H6l3-10c.5-2 1.500-3 3-3h1c2 0 3 1 2.500 4L14 12c-.5 2-1.500 3-3 3z" fill="#e0568c" />
              <path d="M11 15H6l1.500-4h7l-.5 1c-.5 2-1.500 3-3 3z" fill="#f0a040" />
              <path d="M6 1h4c1.500 0 2 1 2.500 2L10 4 6 5z" fill="#3456c8" />
            </g>
          </Icon>
        </Pin>
        <Pin $w={34} aria-label="Edge">
          <Icon w={16}>
            <g stroke="none">
              <circle cx="8" cy="8" r="7.800" fill="#1673c8" />
              <path d="M.5 7C1 3 4 .2 8 .2s7.800 3 7.800 6.500c0 2.300-1.800 3.800-4 3.800s-2.800-1-2-2c.8-1.500-.3-3.500-3-3.500C4 5 1.500 5.500.5 7z" fill="#4cc98a" />
              <path d="M.3 8C1 5 4 3.500 7 4.500 4 6 4 10 6.500 13c1 1 2.500 2 3.500 2.500C4 17 0 13 .3 8z" fill="#2fa0e0" />
            </g>
          </Icon>
        </Pin>
        <Pin as="span" $w={4} />
        <Task $w={111} $gap={2}>
          <Icon w={16}>
            <g stroke="none">
              <path d="M0 2.500h6l2 2h8v9.500H0z" fill="#e0a020" />
              <path d="M0 6h16v8H0z" fill="#fbd566" />
            </g>
          </Icon>
          curso_complet...
        </Task>
        <Pin $w={37} aria-label="Tienda">
          <Icon w={16}>
            <path d="M5 4V1h6v3" stroke="#5fb4e8" />
            <rect x="1" y="3" width="14" height="12" rx="1.500" fill="#f0f0f0" stroke="none" />
            <g stroke="none">
              <path d="M4.500 5.500h3v3h-3z" fill="#e8502c" />
              <path d="M8.500 5.500h3v3h-3z" fill="#70b020" />
              <path d="M4.500 9.500h3v3h-3z" fill="#1c90e0" />
              <path d="M8.500 9.500h3v3h-3z" fill="#f0b010" />
            </g>
          </Icon>
        </Pin>
        <Pin as="span" $w={2} />
        <Task $w={112} $gap={4}>
          <Icon w={16}>
            <path d="M5 1h6l1 1.200h1.500L14.500 5l-1.300 6L8 15.500 2.800 11 1.500 5l1-2.800H4z" fill="#e03424" stroke="none" />
            <path d="M4.500 4.500h7L10.500 9 8 12 5.500 9z" fill="#fff" stroke="none" />
            <path d="M6 6.500h4L8 8.500z" fill="#e03424" stroke="none" />
          </Icon>
          Welcome | OBS ...
        </Task>
        <Pin $w={33} aria-label="Correo">
          <Icon w={16}>
            <path d="M0 5.500L8 1l8 4.500V14H0z" fill="#fff" stroke="none" />
            <path d="M2 5.500h13L9 8l1 2.500L6.500 8z" fill="#222" stroke="none" />
          </Icon>
        </Pin>
        <Pin $w={33} aria-label="Juego">
          <Icon w={16}>
            <path d="M1 1h14v14H1z" fill="#9c1218" stroke="none" />
            <path d="M1 5h14v8H1z" fill="#3a1414" stroke="none" />
            <path d="M1 6.500h4l-1 2.500 1 2H1M7 11V7M9.500 12V6.500L12 9l2.500-2.500V12" stroke="#d8c0b0" strokeWidth="1.300" />
          </Icon>
        </Pin>
        <Pin $w={33} aria-label="Aplicación">
          <Icon w={16}>
            <path d="M1 1h14v14H1z" fill="#0c0204" stroke="none" />
            <path d="M2 12c1-5 3-9 6-9s5 4 6 9l-4-1-2 1-2-1z" fill="#9c0c20" stroke="none" />
            <path d="M7 6l2 1-2 2 2 1" stroke="#f05060" />
          </Icon>
        </Pin>
        <Pin $w={33} aria-label="Aplicación">
          <Icon w={16}>
            <circle cx="8" cy="8" r="7" fill="#26262c" stroke="#a0a0a0" />
            <path d="M3 4c1 3 2 3 3 3V5l2 1 2-1v2c1 0 2 0 3-3 .5 4-1 5-2.500 5.500L8 14l-2.500-4.500C4 9 2.500 8 3 4z" fill="#e0e0e8" stroke="none" />
          </Icon>
        </Pin>
        <Pin $w={33} aria-label="Aplicación">
          <Icon w={16}>
            <circle cx="8" cy="8" r="7" stroke="#d4202a" strokeWidth="1.500" />
            <path d="M8 3.500l1.300 2.200h2.600L10.600 8l1.300 2.300H9.300L8 12.500l-1.300-2.200H4.100L5.400 8 4.100 5.700h2.600z" fill="#d4202a" stroke="none" />
            <circle cx="8" cy="8" r="1.500" fill="#1f2224" stroke="none" />
          </Icon>
        </Pin>
        <Pin $w={33} aria-label="Aplicación">
          <Icon w={16}>
            <path d="M1 1h14v14H1z" fill="#1c1a5c" stroke="none" />
            <path d="M3 5.500h6v7H3zM5 5V2.500h7V7M5 8h2" strokeWidth="1.200" />
            <circle cx="11.500" cy="11" r="3.700" fill="#5a9cf0" stroke="none" />
            <path d="M10 10c.5-1.500 3-1 2.500.5l-1 1M11.500 12.500v1" />
          </Icon>
        </Pin>
        <Pin $w={32} aria-label="Aplicación">
          <Icon w={16}>
            <rect x=".5" y=".5" width="15" height="15" rx="3" fill="#4f78d0" stroke="none" />
            <path d="M5.500 13V4H9c3 0 3 5 0 5H5.500" stroke="#fff" strokeWidth="1.700" />
          </Icon>
        </Pin>
        <Task $w={119} $active $gap={4}>
          <ExcelLogo />
          Libro1 - Excel
        </Task>
        <Task $w={112} $gap={8}>
          <ExcelLogo />
          6 Busqueda de ...
        </Task>
        <Task $w={112}>
          <Icon w={16}>
            <circle cx="8" cy="8" r="7.300" fill="#26262a" stroke="#c8c8c8" />
            <path d="M8 8c-3-1-3-4-1-5M8 8c3-1.500 5.500.5 5 3M8 8c0 3-3 5-5 3.500" strokeWidth="1.600" stroke="#c8c8c8" />
          </Icon>
          OBS 31.1.2 - Per...
        </Task>
        <Tray>
          <TrayButton $w={74}>
            <WeatherIcon>
              <Icon w={21} h={20}>
                <circle cx="9" cy="10" r="9" fill="#f08c1c" stroke="none" />
                <path d="M10 17a3 3 0 0 1 1-5.500 4 4 0 0 1 7 1c3 .5 3 4.500.5 4.500z" fill="#c4d8f8" stroke="none" />
              </Icon>
              <WeatherBadge>1</WeatherBadge>
            </WeatherIcon>
            <WeatherText>32°C</WeatherText>
          </TrayButton>
          <TrayButton $w={20} aria-label="Mostrar iconos ocultos"><WideChevron up /></TrayButton>
          <TrayButton $w={22} aria-label="Red">
            <Icon w={16} h={14}>
              <path d="M4.500 2h11v8h-10M10 10v3M7 12.800h6M.7.7h4v4h-4zM2.700 5v8.300H5" strokeWidth="1.200" />
            </Icon>
          </TrayButton>
          <TrayButton $w={28} aria-label="Volumen">
            <Icon w={16} h={14}>
              <path d="M1 5h2.500L7 2v10L3.500 9H1zM9 5c1 1 1 3 0 4M11 3.500c2 2 2 5 0 7M13 2c3 3 3 7 0 10" />
            </Icon>
          </TrayButton>
          <TrayButton $w={34}>ESP</TrayButton>
          <TrayButton $w={67}>4:09 p. m.</TrayButton>
          <TrayButton $w={34} aria-label="Notificaciones">
            <Icon w={16}>
              <path d="M.7 1.500h14.600v10H11L8 15l-3-3.500H.7z" strokeWidth="1.200" />
            </Icon>
          </TrayButton>
          <DesktopEdge />
        </Tray>
      </Taskbar>
    </Window>
  );
}
